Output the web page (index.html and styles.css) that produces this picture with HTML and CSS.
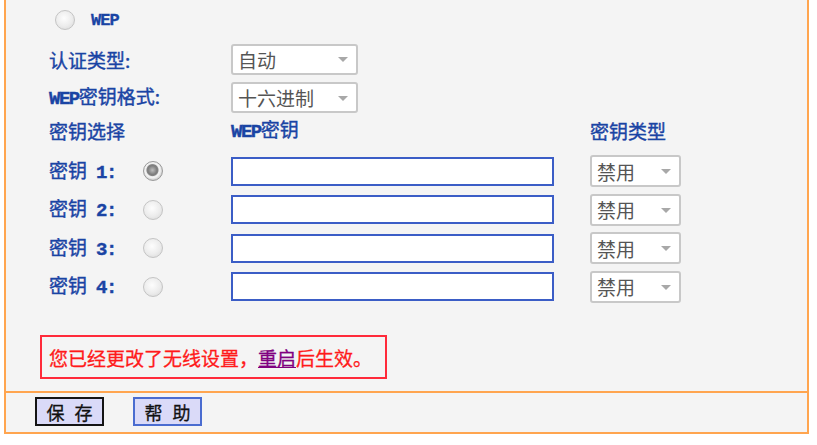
FILE: index.html
```html
<!DOCTYPE html>
<html lang="zh-CN">
<head>
<meta charset="utf-8">
<title>无线安全设置</title>
<link rel="stylesheet" href="styles.css">
</head>
<body>
<div class="panel">
  <div class="content">
    <div class="row-wep">
      <span class="radio"></span>
      <span class="mono">WEP</span>
    </div>
    <div class="field-row">
      <span class="label">认证类型:</span>
      <span class="select select-wide">自动<i class="arrow"></i></span>
    </div>
    <div class="field-row field-row-2">
      <span class="label"><span class="mono">WEP</span>密钥格式:</span>
      <span class="select select-wide">十六进制<i class="arrow"></i></span>
    </div>
    <div class="grid-row head-row">
      <span class="label">密钥选择</span>
      <span></span>
      <span class="label"><span class="mono">WEP</span>密钥</span>
      <span class="label">密钥类型</span>
    </div>
    <div class="keys">
      <div class="grid-row key-row">
        <span class="label">密钥<span class="mono num">1:</span></span>
        <span class="radio checked"></span>
        <span class="input-cell"><span class="text-input"></span></span>
        <span class="select select-narrow">禁用<i class="arrow"></i></span>
      </div>
      <div class="grid-row key-row">
        <span class="label">密钥<span class="mono num">2:</span></span>
        <span class="radio"></span>
        <span class="input-cell"><span class="text-input"></span></span>
        <span class="select select-narrow">禁用<i class="arrow"></i></span>
      </div>
      <div class="grid-row key-row">
        <span class="label">密钥<span class="mono num">3:</span></span>
        <span class="radio"></span>
        <span class="input-cell"><span class="text-input"></span></span>
        <span class="select select-narrow">禁用<i class="arrow"></i></span>
      </div>
      <div class="grid-row key-row">
        <span class="label">密钥<span class="mono num">4:</span></span>
        <span class="radio"></span>
        <span class="input-cell"><span class="text-input"></span></span>
        <span class="select select-narrow">禁用<i class="arrow"></i></span>
      </div>
    </div>
    <div class="notice">您已经更改了无线设置，<a class="reboot" href="#">重启</a>后生效。</div>
  </div>
  <div class="footer">
    <span class="btn btn-save">保 存</span>
    <span class="btn btn-help">帮 助</span>
  </div>
</div>
</body>
</html>
```
FILE: styles.css
```css
* { box-sizing: border-box; }
html, body { margin: 0; padding: 0; background: #ffffff; }
body {
  font-family: "Noto Sans CJK SC", "Noto Sans", sans-serif;
  font-size: 19px;
}
.panel {
  margin-left: 4px;
  width: 805px;
  background: #f4f4f4;
  border-left: 2px solid #ffa54f;
  border-right: 2px solid #ffa54f;
  border-bottom: 2px solid #ffa54f;
}
.content {
  padding: 0 0 12px 43px;
}
.mono {
  font-family: "Liberation Mono", "DejaVu Sans Mono", monospace;
  font-weight: bold;
  font-size: 19px;
  letter-spacing: -1.5px;
}
.label {
  color: #1a44a4;
  line-height: 1;
  white-space: nowrap;
  -webkit-text-stroke: 0.4px #1a44a4;
}
.num { margin-left: 9px; }
.row-wep {
  height: 40px;
  display: flex;
  align-items: center;
  padding-left: 6px;
  gap: 16px;
}
.row-wep .mono { color: #1a44a4; font-size: 17px; letter-spacing: -1px; -webkit-text-stroke: 0.3px #1a44a4; }
.radio {
  display: inline-block;
  width: 20px;
  height: 20px;
  border-radius: 50%;
  border: 1px solid #c4c4c4;
  background: radial-gradient(circle at 45% 40%, #fdfdfd 0%, #ececec 55%, #d4d4d4 100%);
}
.radio.checked {
  border: 1px solid #9a9a9a;
  background:
    radial-gradient(circle at 47% 45%, #bdbdbd 0px, #7d7d7d 4.5px, #858585 5.5px, #ececec 6.5px, #f4f4f4 7.5px, #cdcdcd 10px);
}
.field-row {
  height: 38px;
  display: grid;
  grid-template-columns: 182px 127px;
  align-items: center;
}
.field-row-2 { height: 39px; }
.select {
  position: relative;
  display: flex;
  align-items: center;
  background: #ffffff;
  border: 2px solid #c8c8c8;
  border-radius: 3px;
  color: #555555;
  padding-left: 5px;
  line-height: 1;
}
.select-wide { width: 127px; height: 31px; }
.select-narrow { width: 91px; height: 32px; }
.arrow {
  position: absolute;
  right: 8px;
  top: 50%;
  margin-top: -2px;
  width: 0;
  height: 0;
  border-left: 5px solid transparent;
  border-right: 5px solid transparent;
  border-top: 5px solid #a8a8a8;
}
.grid-row {
  display: grid;
  grid-template-columns: 94px 88px 359px 91px;
  align-items: center;
}
.head-row { height: 26px; }
.keys { padding-top: 9px; }
.key-row { height: 38.5px; }
.text-input {
  display: block;
  width: 323px;
  height: 29px;
  background: #ffffff;
  border: 2px solid #3b5dc6;
}
.notice {
  margin: 29px 0 0 -9px;
  width: 347px;
  height: 44px;
  border: 2px solid #ff2a3a;
  color: #ff1a1a;
  display: flex;
  align-items: center;
  padding-left: 7px;
  white-space: nowrap;
  line-height: 1;
  -webkit-text-stroke: 0.3px #ff1a1a;
}
.reboot {
  color: #800080;
  text-decoration: underline;
  -webkit-text-stroke: 0.3px #800080;
}
.footer {
  border-top: 2px solid #ffa54f;
  height: 41px;
  display: flex;
  align-items: flex-start;
  padding: 4px 0 0 29px;
  gap: 29px;
}
.btn {
  display: flex;
  align-items: center;
  justify-content: center;
  width: 69px;
  height: 29px;
  background: #dadaf8;
  color: #111111;
  font-size: 18px;
  word-spacing: 6px;
  line-height: 1;
  -webkit-text-stroke: 0.3px #111111;
}
.btn-save { border: 2px solid #141414; }
.btn-help { border: 2px solid #4a6cd0; }
```
